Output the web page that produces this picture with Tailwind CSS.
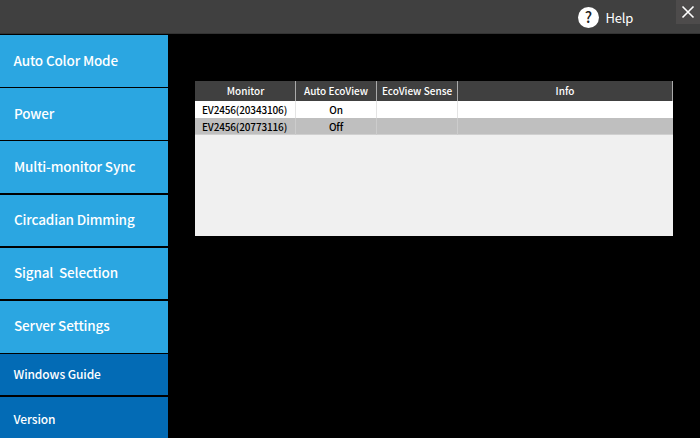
<!DOCTYPE html>
<html lang="en">
  <head>
    <meta charset="UTF-8" />
    <title>Screen InStyle</title>
    <script src="https://cdn.jsdelivr.net/npm/@tailwindcss/browser@4"></script>
  </head>
  <body class="bg-black w-[700px] h-[438px] overflow-hidden font-['Noto_Sans_CJK_JP',sans-serif] text-white">
    <header class="h-[34px] bg-[#404040] border-b border-[#333333] flex items-start justify-end relative">
      <div class="flex items-center gap-[6px] mt-[6px] mr-[67px]">
        <svg width="21" height="21" viewBox="0 0 21 21">
          <circle cx="10.5" cy="10.5" r="10.5" fill="#fff" />
          <text x="10.5" y="16" text-anchor="middle" font-size="15" font-weight="500" fill="#222">?</text>
        </svg>
        <span class="text-[13px] leading-[20px] pt-[2px] tracking-[-0.2px]">Help</span>
      </div>
      <button class="absolute right-0 top-0 w-[24px] h-[24px] bg-[#4d4b4b] flex items-center justify-center">
        <svg width="14" height="14" viewBox="0 0 14 14"><path d="M1.5 1.5 12.5 12.5M12.5 1.5 1.5 12.5" stroke="#fff" stroke-width="1.6" fill="none" /></svg>
      </button>
    </header>

    <div class="flex">
      <nav class="w-[168px] flex flex-col gap-[1.6px] pt-[1px]">
        <div class="h-[51.6px] bg-[#2ba6e1] flex items-center pl-[13.5px] pb-[2px] text-[13.5px] font-medium tracking-[-0.15px]">Auto Color Mode</div>
        <div class="h-[51.6px] bg-[#2ba6e1] flex items-center pl-[14px] pb-[2px] text-[13.5px] font-medium tracking-[-0.15px]">Power</div>
        <div class="h-[51.6px] bg-[#2ba6e1] flex items-center pl-[14px] pb-[2px] text-[13.5px] font-medium tracking-[-0.15px]">Multi-monitor Sync</div>
        <div class="h-[51.6px] bg-[#2ba6e1] flex items-center pl-[14px] pb-[2px] text-[13.5px] font-medium tracking-[-0.15px]">Circadian Dimming</div>
        <div class="h-[51.6px] bg-[#2ba6e1] flex items-center pl-[14px] pb-[2px] text-[13.5px] font-medium tracking-[-0.15px] whitespace-pre">Signal  Selection</div>
        <div class="h-[51.6px] bg-[#2ba6e1] flex items-center pl-[14px] pb-[3px] text-[13.5px] font-medium tracking-[-0.15px]">Server Settings</div>
        <div class="h-[41px] bg-[#036bb5] flex items-center pl-[13.5px] pb-[2px] text-[12px] font-medium tracking-[-0.1px]">Windows Guide</div>
        <div class="h-[41px] bg-[#036bb5] flex items-center pl-[13.5px] pt-[3px] text-[12px] font-medium tracking-[-0.1px]">Version</div>
      </nav>

      <main class="ml-[27px] mt-[47px] w-[478px] h-[155px] bg-[#f0f0f0] self-start">
        <div class="grid grid-cols-[101px_81px_81px_215px] h-[20px] bg-[#404040] text-[10px] font-medium leading-[19px] text-center">
          <div class="border-r border-[#aaaaaa] pl-[1px]">Monitor</div>
          <div class="border-r border-[#aaaaaa]">Auto EcoView</div>
          <div class="border-r border-[#aaaaaa]">EcoView Sense</div>
          <div class="border-r border-[#aaaaaa]">Info</div>
        </div>
        <div class="grid grid-cols-[101px_81px_81px_215px] h-[17px] bg-white text-black text-[10px] font-medium tracking-[-0.15px] leading-[17px]">
          <div class="border-r border-[#e4e4e4] pl-[7px]">EV2456(20343106)</div>
          <div class="border-r border-[#e4e4e4] text-center">On</div>
          <div class="border-r border-[#e4e4e4]"></div>
          <div></div>
        </div>
        <div class="grid grid-cols-[101px_81px_81px_215px] h-[17px] bg-[#bfbfbf] border-b border-[#d0d0d0] text-black text-[10px] font-medium tracking-[-0.15px] leading-[17px]">
          <div class="border-r border-[#cccccc] pl-[7px]">EV2456(20773116)</div>
          <div class="border-r border-[#cccccc] text-center">Off</div>
          <div class="border-r border-[#cccccc]"></div>
          <div></div>
        </div>
      </main>
    </div>
  </body>
</html>
